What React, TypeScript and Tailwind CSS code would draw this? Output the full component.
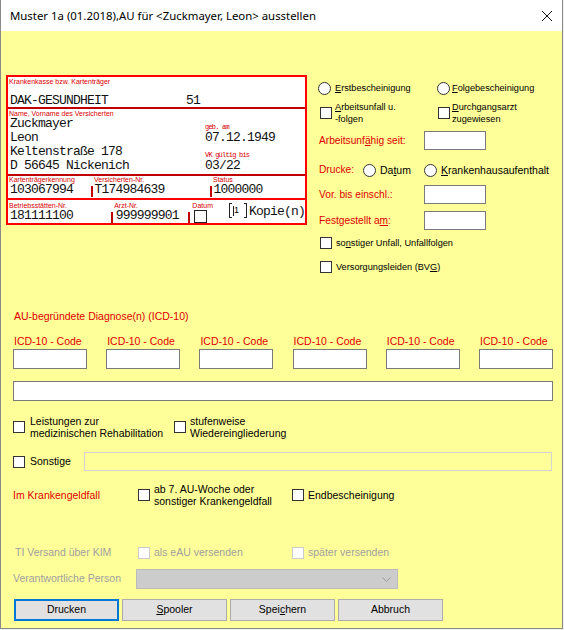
import type { ReactNode } from 'react';

// Windows-style controls for the AU dialog
function Radio() {
  return <span className="w-[13px] h-[13px] shrink-0 rounded-full border border-[#333333] bg-white" />;
}

function Check({ disabled = false }: { disabled?: boolean }) {
  return (
    <span
      className={
        disabled
          ? 'w-[12px] h-[12px] shrink-0 border border-[#cccccc] bg-white'
          : 'w-[12px] h-[12px] shrink-0 border border-[#333333] bg-white'
      }
    />
  );
}

function U({ children }: { children: ReactNode }) {
  return <span className="underline underline-offset-[1px]">{children}</span>;
}

function Field({ w = 'w-[62px]' }: { w?: string }) {
  return <div className={`${w} h-[19px] border border-[#7a7a7a] bg-white`} />;
}

const mono = "font-['Liberation_Mono','Courier_New',monospace] text-[13px] tracking-[-0.8px] leading-[14px] text-[#111]";
const tiny = 'text-[7px] leading-[8px] text-[#d80000]';
const redLabel = 'text-[10.2px] text-[#dd0000]';

function Bar() {
  return <span className="w-[1.5px] h-[11px] bg-[#c00000] shrink-0" />;
}

function CardBox() {
  return (
    <div className="ml-[5px] w-[301px] h-[150px] shrink-0 border-2 border-[#ff0000] bg-white flex flex-col">
      {/* Krankenkasse */}
      <div className="h-[32px] border-b-2 border-[#c00000] pt-[1px]">
        <div className={`${tiny} pl-[1px]`}>Krankenkasse bzw. Kartenträger</div>
        <div className={`${mono} mt-[8px] flex`}>
          <span className="w-[178px] pl-[2px]">DAK-GESUNDHEIT</span>
          <span>51</span>
        </div>
      </div>

      {/* Name / Anschrift */}
      <div className="h-[67px] border-b-2 border-[#c00000] pt-[1px]">
        <div className={`${tiny} pl-[1px]`}>Name, Vorname des Versicherten</div>
        <div className={`${mono} mt-[-1px] grid grid-cols-[197px_1fr]`}>
          <span className="pl-[2px] h-[14px]">Zuckmayer</span>
          <span className="h-[14px] flex items-end">
            <span className={tiny}>geb. am</span>
          </span>
          <span className="pl-[2px] h-[14px]">Leon</span>
          <span className="h-[14px]">07.12.1949</span>
          <span className="pl-[2px] h-[14px]">Keltenstraße 178</span>
          <span className="h-[14px] flex items-end">
            <span className={tiny}>VK gültig bis</span>
          </span>
          <span className="pl-[2px] h-[14px]">D 56645 Nickenich</span>
          <span className="h-[14px]">03/22</span>
        </div>
      </div>

      {/* Kennungen */}
      <div className="h-[24px] border-b-2 border-[#ff0000]">
        <div className={`${tiny} flex`}>
          <span className="w-[83px] pl-[1px]">Kartenträgerkennung</span>
          <span className="w-[119px] pl-[3px]">Versicherten-Nr.</span>
          <span className="pl-[3px]">Status</span>
        </div>
        <div className={`${mono} mt-[-1px] flex h-[14px]`}>
          <span className="w-[83px] pl-[2px]">103067994</span>
          <span className="w-[119px] flex items-end gap-[2px]">
            <Bar />
            <span className="self-start">T174984639</span>
          </span>
          <span className="flex items-end gap-[2px]">
            <Bar />
            <span className="self-start">1000000</span>
          </span>
        </div>
      </div>

      {/* Betriebsstätte / Arzt */}
      <div className="h-[23px] flex">
        <div className="w-[107px] pt-[2px]">
          <div className={`${tiny} pl-[1px]`}>Betriebsstätten-Nr.</div>
          <div className={`${mono} mt-[-1px] pl-[2px]`}>181111100</div>
        </div>
        <div className="w-[80px] pt-[2px]">
          <div className={`${tiny} pl-[3px]`}>Arzt-Nr.</div>
          <div className={`${mono} mt-[-1px] h-[14px] flex items-end gap-[3px]`}>
            <Bar />
            <span className="self-start">999999901</span>
          </div>
        </div>
        <div className="flex-1 flex items-end">
          <div className="h-full flex flex-col pt-[2px]">
            <div className={`${tiny} pl-[4px]`}>Datum</div>
            <div className="mt-auto mb-[1px] flex items-end gap-[4px]">
              <Bar />
              <span className="w-[13px] h-[13px] border border-[#222] bg-white" />
            </div>
          </div>
          <div className="ml-[16px] mb-[5px] h-[15px] w-[18px] flex justify-between">
            <span className="w-[3px] h-full border-l border-y border-[#222]" />
            <span className="flex-1 flex items-center pl-[1px] text-[9px] leading-none font-['Liberation_Sans',Arial,sans-serif]">
              <span className="w-px h-[10px] bg-[#222]" />1
            </span>
            <span className="w-[3px] h-full border-r border-y border-[#222]" />
          </div>
          <span className={`${mono} ml-[2px] mb-[4px] text-[12px] tracking-[-0.6px]`}>Kopie(n)</span>
        </div>
      </div>
    </div>
  );
}

function RightColumn() {
  return (
    <div className="ml-[11px] flex flex-col text-[9.2px] leading-[12px]">
      <div className="mt-[6px] h-[14px] flex items-center">
        <div className="w-[119px] flex items-center gap-[4px]">
          <Radio />
          <span><U>E</U>rstbescheinigung</span>
        </div>
        <div className="flex items-center gap-[2px]">
          <Radio />
          <span><U>F</U>olgebescheinigung</span>
        </div>
      </div>

      <div className="mt-[6px] h-[24px] flex items-center">
        <div className="ml-[2px] w-[118px] flex items-center gap-[3px]">
          <Check />
          <span>
            <U>A</U>rbeitsunfall u.
            <br />
            -folgen
          </span>
        </div>
        <div className="flex items-center gap-[2px]">
          <Check />
          <span>
            <U>D</U>urchgangsarzt
            <br />
            zugewiesen
          </span>
        </div>
      </div>

      <div className="mt-[6px] h-[19px] flex items-center">
        <span className={`${redLabel} w-[106px] pl-[1px]`}>
          Arbeitsunf<U>ä</U>hig seit:
        </span>
        <Field />
      </div>

      <div className="mt-[13px] h-[14px] flex items-center text-[10.5px]">
        <span className={`${redLabel} w-[45px] pl-[1px]`}>Drucke:</span>
        <div className="w-[61px] flex items-center gap-[4px]">
          <Radio />
          <span>Da<U>t</U>um</span>
        </div>
        <div className="flex items-center gap-[4px]">
          <Radio />
          <span><U>K</U>rankenhausaufenthalt</span>
        </div>
      </div>

      <div className="mt-[8px] h-[19px] flex items-center">
        <span className={`${redLabel} w-[106px] pl-[1px]`}>Vor. bis einschl.:</span>
        <Field />
      </div>

      <div className="mt-[7px] h-[19px] flex items-center">
        <span className={`${redLabel} w-[106px] pl-[1px]`}>
          Festgestellt a<U>m</U>:
        </span>
        <Field />
      </div>

      <div className="mt-[7px] h-[12px] ml-[2px] flex items-center gap-[4px]">
        <Check />
        <span>so<U>n</U>stiger Unfall, Unfallfolgen</span>
      </div>

      <div className="mt-[12px] h-[12px] ml-[2px] flex items-center gap-[4px]">
        <Check />
        <span>Versorgungsleiden (BV<U>G</U>)</span>
      </div>
    </div>
  );
}

const icdSlots = [1, 2, 3, 4, 5, 6];

function Button({ children, primary = false }: { children: ReactNode; primary?: boolean }) {
  return (
    <div
      className={
        primary
          ? 'w-[105px] h-[22px] flex items-center justify-center bg-[#e1e1e1] border-2 border-[#0078d7]'
          : 'w-[105px] h-[22px] flex items-center justify-center bg-[#e1e1e1] border border-[#adadad]'
      }
    >
      {children}
    </div>
  );
}

export default function App() {
  return (
    <div className="w-[564px] h-[630px] bg-[#f0f0f0] font-['Liberation_Sans',Arial,sans-serif] text-black">
      <div className="w-[563px] h-[629px] flex flex-col border-x border-b border-[#8a8a8a]">
        {/* title bar */}
        <div className="h-[31px] shrink-0 bg-white flex items-center justify-between pl-[9px] pr-[8px]">
          <span className="font-['Noto_Sans',sans-serif] text-[11.4px] leading-none">
            Muster 1a (01.2018),AU für &lt;Zuckmayer, Leon&gt; ausstellen
          </span>
          <svg width="12" height="12" viewBox="0 0 12 12" className="mr-[1px] mt-[1px]">
            <path d="M1 1 L11 11 M11 1 L1 11" stroke="#111" strokeWidth="1" />
          </svg>
        </div>

        <div className="flex-1 bg-[#ffff99] flex flex-col">
          <div className="pt-[44px] flex items-start">
            <CardBox />
            <RightColumn />
          </div>

          {/* Diagnosen */}
          <div className="mt-[37px] ml-[13px] text-[10.5px] leading-[13px] text-[#dd0000]">
            AU-begründete Diagnose(n) (ICD-10)
          </div>
          <div className="mt-[12px] ml-[12px] w-[540px] grid grid-cols-6 gap-x-[19.2px]">
            {icdSlots.map(i => (
              <div key={i} className="flex flex-col">
                <span className="pl-[1px] text-[10.5px] leading-[13px] text-[#dd0000]">ICD-10 - Code</span>
                <div className="mt-[1px] h-[20px] border border-[#7a7a7a] bg-white" />
              </div>
            ))}
          </div>
          <div className="mt-[12px] ml-[12px] w-[540px] h-[20px] border border-[#7a7a7a] bg-white" />

          <div className="mt-[14px] ml-[12px] h-[24px] flex items-center text-[10.5px] leading-[12px]">
            <div className="w-[161px] flex items-center gap-[5px]">
              <Check />
              <span>
                Leistungen zur
                <br />
                medizinischen Rehabilitation
              </span>
            </div>
            <div className="flex items-center gap-[4px]">
              <Check />
              <span>
                stufenweise
                <br />
                Wiedereingliederung
              </span>
            </div>
          </div>

          <div className="mt-[13px] ml-[12px] h-[19px] flex items-center text-[10.5px]">
            <div className="w-[71px] flex items-center gap-[5px]">
              <Check />
              <span>Sonstige</span>
            </div>
            <div className="w-[468px] h-[19px] border border-[#d4d4d4] bg-[#ffff99]" />
          </div>

          <div className="mt-[12px] ml-[12px] h-[24px] flex items-center text-[10.5px] leading-[12px]">
            <span className="w-[125px] text-[#dd0000]">Im Krankengeldfall</span>
            <div className="w-[154px] flex items-center gap-[4px]">
              <Check />
              <span>
                ab 7. AU-Woche oder
                <br />
                sonstiger Krankengeldfall
              </span>
            </div>
            <div className="flex items-center gap-[4px]">
              <Check />
              <span>Endbescheinigung</span>
            </div>
          </div>

          {/* TI / KIM */}
          <div className="mt-[40px] ml-[12px] h-[12px] flex items-center text-[10.5px] text-[#a0a0a0]">
            <span className="w-[125px] pl-[2px]">TI Versand über KIM</span>
            <div className="w-[154px] flex items-center gap-[4px]">
              <Check disabled />
              <span>als eAU versenden</span>
            </div>
            <div className="flex items-center gap-[4px]">
              <Check disabled />
              <span>später versenden</span>
            </div>
          </div>

          <div className="mt-[10px] ml-[12px] h-[20px] flex items-center text-[10.5px] text-[#a0a0a0]">
            <span className="w-[123px]">Verantwortliche Person</span>
            <div className="w-[262px] h-[20px] bg-[#cccccc] border border-[#bcbcbc] flex items-center justify-end pr-[6px]">
              <svg width="9" height="5" viewBox="0 0 9 5">
                <path d="M0.5 0.5 L4.5 4.5 L8.5 0.5" fill="none" stroke="#9a9a9a" strokeWidth="1" />
              </svg>
            </div>
          </div>

          <div className="mt-[10px] ml-[13px] flex gap-[3px] text-[10.5px]">
            <Button primary>Drucken</Button>
            <Button>
              <span><U>S</U>pooler</span>
            </Button>
            <Button>
              <span>Spei<U>c</U>hern</span>
            </Button>
            <Button>Abbruch</Button>
          </div>
        </div>
      </div>
    </div>
  );
}
